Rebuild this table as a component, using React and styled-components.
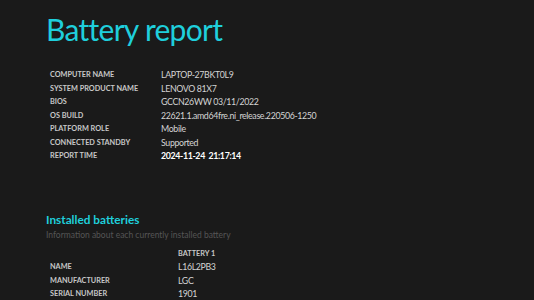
import React from "react";
import styled, { createGlobalStyle } from "styled-components";

const Global = createGlobalStyle`
  html, body { margin: 0; padding: 0; background: #1a1a1a; }
  body { font-family: Lato, "Open Sans", sans-serif; color: #d0d0d0; }
`;

const Page = styled.div`
  width: 534px;
  height: 300px;
  overflow: hidden;
  padding: 8px 0 0 46px;
  box-sizing: border-box;
`;

const Title = styled.h1`
  margin: 0;
  font-weight: 400;
  font-size: 30px;
  line-height: 42px;
  letter-spacing: -0.7px;
  color: #1fcfdc;
`;

const InfoTable = styled.table`
  border-collapse: collapse;
  margin-top: ${(p) => p.$top}px;
  margin-left: ${(p) => p.$left || 0}px;
`;

const Row = styled.tr`
  height: 13.5px;
`;

const Label = styled.td`
  width: ${(p) => p.$w}px;
  padding: 0;
  font-size: 7.3px;
  font-weight: 700;
  text-transform: uppercase;
  color: #c8c8c8;
  line-height: 13.5px;
  white-space: nowrap;
`;

const Value = styled.td`
  padding: 0;
  font-size: 8.8px;
  line-height: 13.5px;
  letter-spacing: -0.35px;
  color: ${(p) => (p.$strong ? "#ffffff" : "#d4d4d4")};
  font-weight: ${(p) => (p.$strong ? 700 : 400)};
  white-space: pre;
`;

const Section = styled.div`
  margin-top: 48px;
`;

const Heading = styled.h2`
  margin: 0;
  font-weight: 700;
  font-size: 11.8px;
  line-height: 18px;
  color: #1fcfdc;
`;

const Sub = styled.div`
  font-size: 8.5px;
  line-height: 12px;
  color: #555;
`;

const ColHead = styled.th`
  padding: 0;
  text-align: left;
  font-size: 7.3px;
  font-weight: 700;
  color: #c8c8c8;
  line-height: 13.5px;
`;

const system = [
  ["Computer name", "LAPTOP-27BKT0L9"],
  ["System product name", "LENOVO 81X7"],
  ["BIOS", "GCCN26WW 03/11/2022"],
  ["OS build", "22621.1.amd64fre.ni_release.220506-1250"],
  ["Platform role", "Mobile"],
  ["Connected standby", "Supported"],
  ["Report time", "2024-11-24  21:17:14", true],
];

const battery = [
  ["Name", "L16L2PB3"],
  ["Manufacturer", "LGC"],
  ["Serial number", "1901"],
];

export default function App() {
  return (
    <Page>
      <Global />
      <Title>Battery report</Title>
      <InfoTable $top={18} $left={4}>
        <tbody>
          {system.map(([k, v, s]) => (
            <Row key={k}>
              <Label $w={111}>{k}</Label>
              <Value $strong={s}>{v}</Value>
            </Row>
          ))}
        </tbody>
      </InfoTable>
      <Section>
        <Heading>Installed batteries</Heading>
        <Sub>Information about each currently installed battery</Sub>
        <InfoTable $top={6} $left={4}>
          <thead>
            <Row>
              <Label $w={128}></Label>
              <ColHead>BATTERY 1</ColHead>
            </Row>
          </thead>
          <tbody>
            {battery.map(([k, v]) => (
              <Row key={k}>
                <Label $w={128}>{k}</Label>
                <Value>{v}</Value>
              </Row>
            ))}
          </tbody>
        </InfoTable>
      </Section>
    </Page>
  );
}
